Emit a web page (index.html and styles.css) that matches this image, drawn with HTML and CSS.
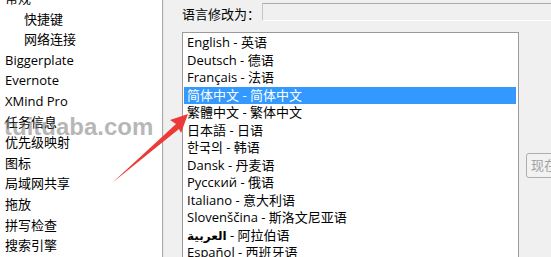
FILE: index.html
```html
<!DOCTYPE html>
<html>
<head>
<meta charset="utf-8">
<link rel="stylesheet" href="styles.css">
</head>
<body>
<div class="page">
  <div class="nav">
    <ul class="nav-list">
      <li class="nav-item">常规</li>
      <li class="nav-item sub">快捷键</li>
      <li class="nav-item sub">网络连接</li>
      <li class="nav-item">Biggerplate</li>
      <li class="nav-item">Evernote</li>
      <li class="nav-item">XMind Pro</li>
      <li class="nav-item">任务信息</li>
      <li class="nav-item">优先级映射</li>
      <li class="nav-item">图标</li>
      <li class="nav-item">局域网共享</li>
      <li class="nav-item">拖放</li>
      <li class="nav-item">拼写检查</li>
      <li class="nav-item">搜索引擎</li>
    </ul>
  </div>
  <div class="main">
    <div class="lang-row">
      <span class="lang-label">语言修改为：</span>
      <div class="lang-input"></div>
    </div>
    <div class="body-row">
      <ul class="listbox">
        <li class="opt">English - 英语</li>
        <li class="opt">Deutsch - 德语</li>
        <li class="opt">Français - 法语</li>
        <li class="opt selected">简体中文 - 简体中文</li>
        <li class="opt">繁體中文 - 繁体中文</li>
        <li class="opt">日本語 - 日语</li>
        <li class="opt">한국의 - 韩语</li>
        <li class="opt">Dansk - 丹麦语</li>
        <li class="opt">Русский - 俄语</li>
        <li class="opt">Italiano - 意大利语</li>
        <li class="opt">Slovenščina - 斯洛文尼亚语</li>
        <li class="opt"><span class="ar">العربية</span> - 阿拉伯语</li>
        <li class="opt">Español - 西班牙语</li>
      </ul>
      <div class="side">
        <div class="btn">现在重启</div>
      </div>
    </div>
  </div>
  <div class="watermark">tuituaba.com</div>
  <svg class="arrow" width="551" height="257" viewBox="0 0 551 257">
    <polygon points="188,114 170,120 176,124 112,183 179,129 181,133" fill="#eb3a37"/>
  </svg>
</div>
</body>
</html>
```
FILE: styles.css
```css
* { box-sizing: border-box; }
html, body {
  margin: 0;
  padding: 0;
  width: 551px;
  height: 257px;
  overflow: hidden;
  background: #f0f0f0;
}
.page {
  position: relative;
  display: flex;
  width: 551px;
  height: 257px;
  overflow: hidden;
  font-family: "Open Sans", "Noto Sans CJK SC", "DejaVu Sans", sans-serif;
  font-size: 13px;
  color: #000;
}
.nav {
  flex: 0 0 163px;
  background: #fff;
  border-right: 1px solid #a9a9a9;
  overflow: hidden;
}
.nav-list {
  list-style: none;
  margin: -11.9px 0 0 0;
  padding: 0;
}
.nav-item {
  height: 20.6px;
  line-height: 20.6px;
  padding-left: 5px;
  white-space: nowrap;
}
.nav-item.sub { padding-left: 24px; }
.main {
  flex: 0 0 auto;
  display: flex;
  flex-direction: column;
  padding: 3px 0 0 18px;
  border-left: 1px solid #e6e6e6;
}
.lang-row {
  display: flex;
  align-items: center;
  height: 18px;
}
.lang-label {
  width: 80px;
  flex: 0 0 80px;
  white-space: nowrap;
  padding-top: 2px;
}
.lang-input {
  width: 320px;
  height: 18px;
  background: #f0f0f0;
  border-top: 1px solid #abadb3;
  border-left: 1px solid #c4c6cc;
  border-bottom: 1px solid #ffffff;
}
.body-row {
  display: flex;
  margin-top: 11px;
}
.listbox {
  list-style: none;
  margin: 0;
  width: 337px;
  height: 260px;
  flex: 0 0 337px;
  padding: 1.25px 1px 0 1px;
  background: #fff;
  border: 1px solid #9a9b9d;
}
.opt {
  height: 17.5px;
  line-height: 17.5px;
  padding-left: 3px;
  white-space: nowrap;
}
.opt.selected {
  background: #3399ff;
  color: #fff;
  margin-right: 1px;
}
.ar { font-family: "DejaVu Sans", sans-serif; font-weight: bold; font-size: 12px; }
.side {
  flex: 0 0 auto;
  padding-left: 7px;
  padding-top: 121px;
}
.btn {
  width: 80px;
  height: 25px;
  line-height: 23px;
  border: 1px solid #adadad;
  border-radius: 3px;
  background: #f2f2f2;
  color: #a3a3a3;
  padding-left: 4px;
  white-space: nowrap;
}
.watermark {
  position: absolute;
  left: 4px;
  top: 115px;
  font-family: "Liberation Sans", Arial, sans-serif;
  font-weight: bold;
  font-size: 24px;
  line-height: 24px;
  color: rgba(110, 110, 110, 0.5);
  white-space: nowrap;
  z-index: 1;
}
.arrow {
  position: absolute;
  left: 0;
  top: 0;
  z-index: 2;
}
```
